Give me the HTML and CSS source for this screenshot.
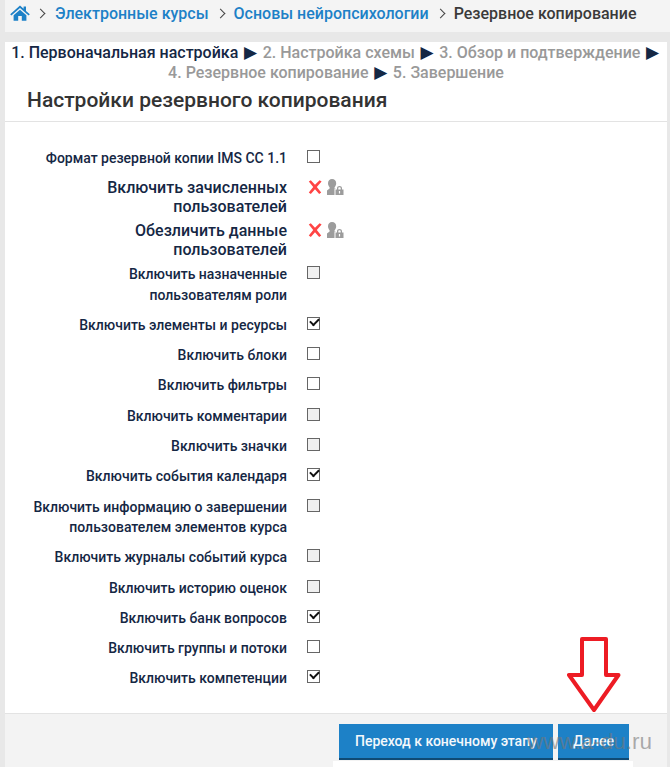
FILE: index.html
```html
<!DOCTYPE html>
<html lang="ru">
<head>
<meta charset="utf-8">
<title>Резервное копирование</title>
<link rel="stylesheet" href="styles.css">
</head>
<body>
<nav class="crumbs">
  <svg class="home" viewBox="0 0 20 16" aria-hidden="true"><path d="M10 0.6 L13.6 3.8 V1.6 H16 V5.9 L19.8 9.2 L18.6 10.4 L10 3 L1.4 10.4 L0.2 9.2 Z M3.6 10.2 L10 4.7 L16.4 10.2 V15.8 H11.8 V11 H8.2 V15.8 H3.6 Z"/></svg>
  <span class="sep"></span>
  <a class="link">Электронные курсы</a>
  <span class="sep"></span>
  <a class="link">Основы нейропсихологии</a>
  <span class="sep"></span>
  <span class="current">Резервное копирование</span>
</nav>
<main class="panel">
  <div class="steps"><b class="on">1. Первоначальная настройка</b> <i>▶</i> 2. Настройка схемы <i>▶</i> 3. Обзор и подтверждение <i>▶</i><br>4. Резервное копирование <i>▶</i> 5. Завершение</div>
  <h2>Настройки резервного копирования</h2>
  <form class="form">
    <div class="row"><label>Формат резервной копии IMS CC 1.1</label><span class="box"></span></div>
    <div class="row static"><label>Включить зачисленных пользователей</label><span class="icons"><svg class="x" viewBox="0 0 14 14"><path d="M0.8 1.6 L2.8 0.2 L7 4.8 L11.6 0.2 L13.6 1.4 L8.8 7 L13.2 12.4 L11.2 14 L7 9.2 L2.8 14 L0.8 12.4 L5.2 7 Z"/></svg><svg class="lock" viewBox="0 0 17 16"><path d="M5 0 C7.6 0 9.2 1.8 9.2 4.3 C9.2 6 8.4 7.4 7.6 8.2 V9.2 L9 9.8 V16 H0 V11.5 L2.6 9.6 V8.2 C1.8 7.4 1 6 1 4.3 C1 1.8 2.6 0 5 0 Z"/><path class="halo" d="M7.5 16 V9.5 H9.5 V9 C9.5 7 10.8 6 12.5 6 C14.2 6 15.5 7 15.5 9 V9.5 H17 V16 Z"/><path fill-rule="evenodd" d="M8.5 10.5 H10 V9.2 C10 7.9 11.1 7 12.5 7 C13.9 7 15 7.9 15 9.2 V10.5 H16.5 V16 H8.5 Z M11.3 10.5 H13.7 V9.2 C13.7 8.6 13.2 8.2 12.5 8.2 C11.8 8.2 11.3 8.6 11.3 9.2 Z M11.9 12 V14.4 H13.1 V12 Z"/></svg></span></div>
    <div class="row static"><label>Обезличить данные пользователей</label><span class="icons"><svg class="x" viewBox="0 0 14 14"><path d="M0.8 1.6 L2.8 0.2 L7 4.8 L11.6 0.2 L13.6 1.4 L8.8 7 L13.2 12.4 L11.2 14 L7 9.2 L2.8 14 L0.8 12.4 L5.2 7 Z"/></svg><svg class="lock" viewBox="0 0 17 16"><path d="M5 0 C7.6 0 9.2 1.8 9.2 4.3 C9.2 6 8.4 7.4 7.6 8.2 V9.2 L9 9.8 V16 H0 V11.5 L2.6 9.6 V8.2 C1.8 7.4 1 6 1 4.3 C1 1.8 2.6 0 5 0 Z"/><path class="halo" d="M7.5 16 V9.5 H9.5 V9 C9.5 7 10.8 6 12.5 6 C14.2 6 15.5 7 15.5 9 V9.5 H17 V16 Z"/><path fill-rule="evenodd" d="M8.5 10.5 H10 V9.2 C10 7.9 11.1 7 12.5 7 C13.9 7 15 7.9 15 9.2 V10.5 H16.5 V16 H8.5 Z M11.3 10.5 H13.7 V9.2 C13.7 8.6 13.2 8.2 12.5 8.2 C11.8 8.2 11.3 8.6 11.3 9.2 Z M11.9 12 V14.4 H13.1 V12 Z"/></svg></span></div>
    <div class="row"><label>Включить назначенные пользователям роли</label><span class="box off"></span></div>
    <div class="row"><label>Включить элементы и ресурсы</label><span class="box on"></span></div>
    <div class="row"><label>Включить блоки</label><span class="box"></span></div>
    <div class="row"><label>Включить фильтры</label><span class="box"></span></div>
    <div class="row"><label>Включить комментарии</label><span class="box off"></span></div>
    <div class="row"><label>Включить значки</label><span class="box off"></span></div>
    <div class="row"><label>Включить события календаря</label><span class="box on"></span></div>
    <div class="row"><label>Включить информацию о завершении пользователем элементов курса</label><span class="box off"></span></div>
    <div class="row"><label>Включить журналы событий курса</label><span class="box off"></span></div>
    <div class="row"><label>Включить историю оценок</label><span class="box off"></span></div>
    <div class="row"><label>Включить банк вопросов</label><span class="box on"></span></div>
    <div class="row"><label>Включить группы и потоки</label><span class="box"></span></div>
    <div class="row"><label>Включить компетенции</label><span class="box on"></span></div>
  </form>
  <footer class="actions">
    <button type="button" class="btn">Переход к конечному этапу</button>
    <button type="button" class="btn">Далее</button>
  </footer>
</main>
<div class="strip"></div>
<svg class="arrow" viewBox="0 0 54 76" aria-hidden="true"><path d="M15 3 H39 V39 H51.5 L27 74 L2 39 H15 Z"/></svg>
<div class="mark">www.a-du.ru</div>
</body>
</html>
```
FILE: styles.css
```css
html, body { margin: 0; padding: 0; }
body {
  width: 670px;
  height: 767px;
  overflow: hidden;
  position: relative;
  background: #e8e8e8;
  font-family: Roboto, "Liberation Sans", sans-serif;
  font-weight: 500;
  color: #152744;
}
.crumbs {
  box-sizing: border-box;
  height: 32px;
  margin-left: 5px;
  margin-bottom: 10px;
  padding: 0 0 6px 5px;
  background: #f4f4f4;
  display: flex;
  align-items: center;
  font-size: 16px;
}
.home { width: 20px; height: 16px; fill: #1d81c7; flex: none; }
.sep {
  width: 6px;
  height: 6px;
  border-top: 1.5px solid #444;
  border-right: 1.5px solid #444;
  transform: rotate(45deg);
  margin: 0 10px 0 8px;
  flex: none;
}
.crumbs .sep:nth-of-type(1) { margin: 0 11px 0 7px; }
.link { color: #1d81c7; }
.current { color: #3a3a3a; }
.panel {
  margin: 0 3px 0 5px;
  background: #fff;
  height: 725px;
  display: flex;
  flex-direction: column;
}
.steps {
  padding-top: 1px;
  text-align: center;
  font-size: 16px;
  line-height: 19.5px;
  color: #999;
  white-space: nowrap;
}
.steps .on { color: #152744; font-weight: 500; }
.steps i { font-style: normal; color: #152744; font-family: "DejaVu Sans", sans-serif; font-size: 17px; line-height: 0; margin: 0 1.7px; }
h2 {
  margin: 4px 0 0;
  padding: 0 0 7px 22px;
  font-size: 21px;
  line-height: 28px;
  font-weight: 500;
  color: #333;
  border-bottom: 1px solid #e3e3e3;
}
.form { flex: 1; padding-top: 21px; }
.row {
  display: flex;
  font-size: 14px;
  line-height: 20.3px;
  padding: 5px 0;
}
.row label { width: 258px; margin-left: 24px; text-align: right; }
.static { font-size: 16px; line-height: 19px; padding: 5px 0 0; }
.box {
  box-sizing: border-box;
  width: 13px;
  height: 13px;
  margin: 2px 0 0 20px;
  border: 1px solid #666;
  background: #fff;
  position: relative;
}
.box.off { background: #f0f0f0; }
.box.on::after {
  content: "";
  position: absolute;
  left: 1.5px;
  top: 0;
  width: 7px;
  height: 4px;
  border-left: 2px solid #111;
  border-bottom: 2px solid #111;
  transform: rotate(-45deg);
}
.icons { display: flex; align-items: flex-start; gap: 5px; margin: 1px 0 0 21px; }
.x { width: 14px; height: 14px; margin-top: 1px; fill: #f44; }
.lock { width: 17px; height: 16px; fill: #9c9c9c; }
.lock .halo { fill: #fff; }
.actions {
  height: 54px;
  box-sizing: border-box;
  background: #f3f3f3;
  border-top: 1px solid #e3e3e3;
  padding: 10px 38px 0 334px;
  display: flex;
  gap: 5px;
  align-items: flex-start;
}
.btn {
  height: 36px;
  padding: 0 15px;
  flex: none;
  border: 0;
  border-bottom: 2px solid #0f4a75;
  background: #1d81c7;
  color: #f4f8fb;
  font: 500 14px Roboto, "Liberation Sans", sans-serif;
  white-space: nowrap;
}
.btn:first-child { width: 214px; }
.btn:last-child { width: 71px; }
.strip { position: absolute; left: 333px; top: 761px; width: 300px; height: 6px; background: #fff; }
.arrow { position: absolute; left: 567px; top: 636px; width: 54px; height: 76px; fill: #fff; stroke: #ed1c24; stroke-width: 4; stroke-linejoin: round; }
.mark { position: absolute; left: 527px; top: 729px; font: 400 22.5px "Liberation Sans", sans-serif; color: rgba(120,120,120,.6); white-space: nowrap; }
```
